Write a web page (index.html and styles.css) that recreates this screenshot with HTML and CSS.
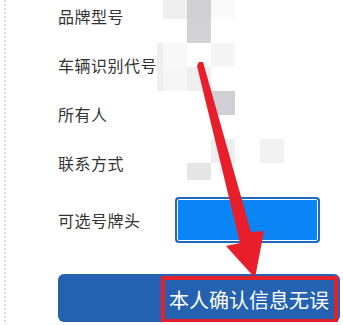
FILE: index.html
```html
<!DOCTYPE html>
<html lang="zh-CN">
<head>
<meta charset="utf-8">
<link rel="stylesheet" href="styles.css">
</head>
<body>
<div class="page">
  <div class="rail"></div>
  <div class="content">
    <div class="form">
      <div class="row"><span class="label">品牌型号</span></div>
      <div class="row"><span class="label">车辆识别代号</span></div>
      <div class="row"><span class="label">所有人</span></div>
      <div class="row"><span class="label">联系方式</span></div>
      <div class="row row-select"><span class="label">可选号牌头</span><div class="select-box"></div></div>
    </div>
    <div class="confirm-btn"><span class="confirm-text">本人确认信息无误</span></div>
  </div>
  <div class="mosaic">
    <div class="m" style="left:0;top:0;background:#efefef"></div>
    <div class="m" style="left:24px;top:0;background:#d0d0d4"></div>
    <div class="m" style="left:48px;top:0;background:#fafafa"></div>
    <div class="m" style="left:24px;top:24px;background:#d2d2d6"></div>
    <div class="m" style="left:-6px;top:48px;width:6px;height:48px;background:#eeeeee"></div>
    <div class="m" style="left:0;top:48px;background:#f8f8f8"></div>
    <div class="m" style="left:48px;top:48px;background:#f5f5f5"></div>
    <div class="m" style="left:0;top:72px;background:#f6f6f6"></div>
    <div class="m" style="left:24px;top:72px;background:#efefef"></div>
    <div class="m" style="left:48px;top:96px;background:#d0d0d4"></div>
    <div class="m" style="left:48px;top:144px;background:#eeeeee"></div>
    <div class="m" style="left:97px;top:144px;background:#f2f2f2"></div>
    <div class="m" style="left:24px;top:168px;height:17px;background:#e5e5e5"></div>
  </div>
  <svg class="arrow" width="343" height="325" viewBox="0 0 343 325">
    <polygon points="197,66 199,62 203,62 251,232 264,231 255,278 226,246 240,243" fill="#e81f2b"/>
  </svg>
</div>
</body>
</html>
```
FILE: styles.css
```css
html, body {
  margin: 0;
  padding: 0;
  background: #ffffff;
}
body {
  width: 343px;
  height: 325px;
  overflow: hidden;
  font-family: "Noto Sans CJK SC", "Noto Sans", sans-serif;
}
.page {
  position: relative;
  display: flex;
  width: 343px;
  height: 325px;
  overflow: hidden;
}
.rail {
  width: 2px;
  margin-left: 4px;
  flex: none;
  background-image: repeating-linear-gradient(to bottom, #dcdcdc 0, #dcdcdc 2px, transparent 2px, transparent 4px);
}
.content {
  flex: 1;
  padding-left: 52px;
  padding-right: 3px;
}
.form {
  margin-top: -9px;
}
.row {
  display: flex;
  align-items: center;
  height: 49px;
}
.row-select {
  height: 66px;
}
.label {
  width: 117px;
  flex: none;
  font-size: 16px;
  color: #333333;
  letter-spacing: 0.5px;
}
.select-box {
  width: 141px;
  height: 42px;
  border: 2px solid #1d6ac6;
  border-radius: 4px;
  background: #0b84f6;
  box-shadow: inset 0 0 0 1px #ffffff;
}
.confirm-btn {
  margin-top: 21px;
  height: 48px;
  background: #2462b1;
  border-radius: 6px;
  display: flex;
  justify-content: flex-end;
  align-items: stretch;
  padding: 2px 2px 0 0;
  box-sizing: border-box;
}
.confirm-text {
  display: flex;
  align-items: center;
  border: 4px solid #e3202b;
  border-bottom-width: 3px;
  padding: 0 5px 0 4px;
  font-size: 20px;
  color: #ffffff;
}
.mosaic {
  position: absolute;
  left: 163px;
  top: -5px;
}
.m {
  position: absolute;
  width: 24px;
  height: 24px;
}
.arrow {
  position: absolute;
  left: 0;
  top: 0;
}
```
